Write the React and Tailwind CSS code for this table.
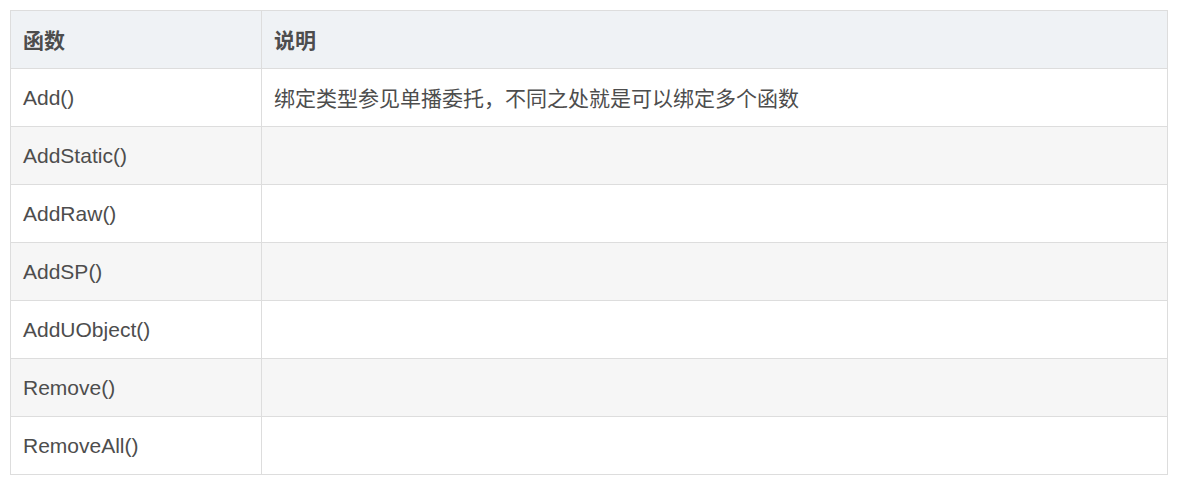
const ROWS = [
  { name: 'Add()', desc: '绑定类型参见单播委托，不同之处就是可以绑定多个函数' },
  { name: 'AddStatic()', desc: '' },
  { name: 'AddRaw()', desc: '' },
  { name: 'AddSP()', desc: '' },
  { name: 'AddUObject()', desc: '' },
  { name: 'Remove()', desc: '' },
  { name: 'RemoveAll()', desc: '' },
];

export default function App() {
  return (
    <div className="min-h-screen bg-white p-[10px] text-[#4d4d4d] font-['Liberation_Sans','Noto_Sans_CJK_SC',sans-serif]">
      <div className="w-[1158px] border border-[#dddddd]">
        {/* header */}
        <div className="grid grid-cols-[251px_1fr] h-[58px] bg-[#eff2f5] border-b border-[#dddddd]">
          <div className="flex items-center pl-3 border-r border-[#dddddd] text-[21px] font-bold font-['Noto_Sans_CJK_SC',sans-serif]">
            函数
          </div>
          <div className="flex items-center pl-3 text-[21px] font-bold font-['Noto_Sans_CJK_SC',sans-serif]">
            说明
          </div>
        </div>

        {ROWS.map((row, i) => {
          const last = i === ROWS.length - 1;
          return (
            <div
              key={row.name}
              className={`grid grid-cols-[251px_1fr] ${last ? 'h-[57px]' : 'h-[58px] border-b border-[#dddddd]'} ${i % 2 === 1 ? 'bg-[#f6f6f6]' : 'bg-white'}`}
            >
              <div className="flex items-center pl-3 border-r border-[#dddddd] text-[21px]">
                {row.name}
              </div>
              <div className="flex items-center pl-3 text-[21px] font-['Noto_Sans_CJK_SC',sans-serif]">
                {row.desc}
              </div>
            </div>
          );
        })}
      </div>
    </div>
  );
}
